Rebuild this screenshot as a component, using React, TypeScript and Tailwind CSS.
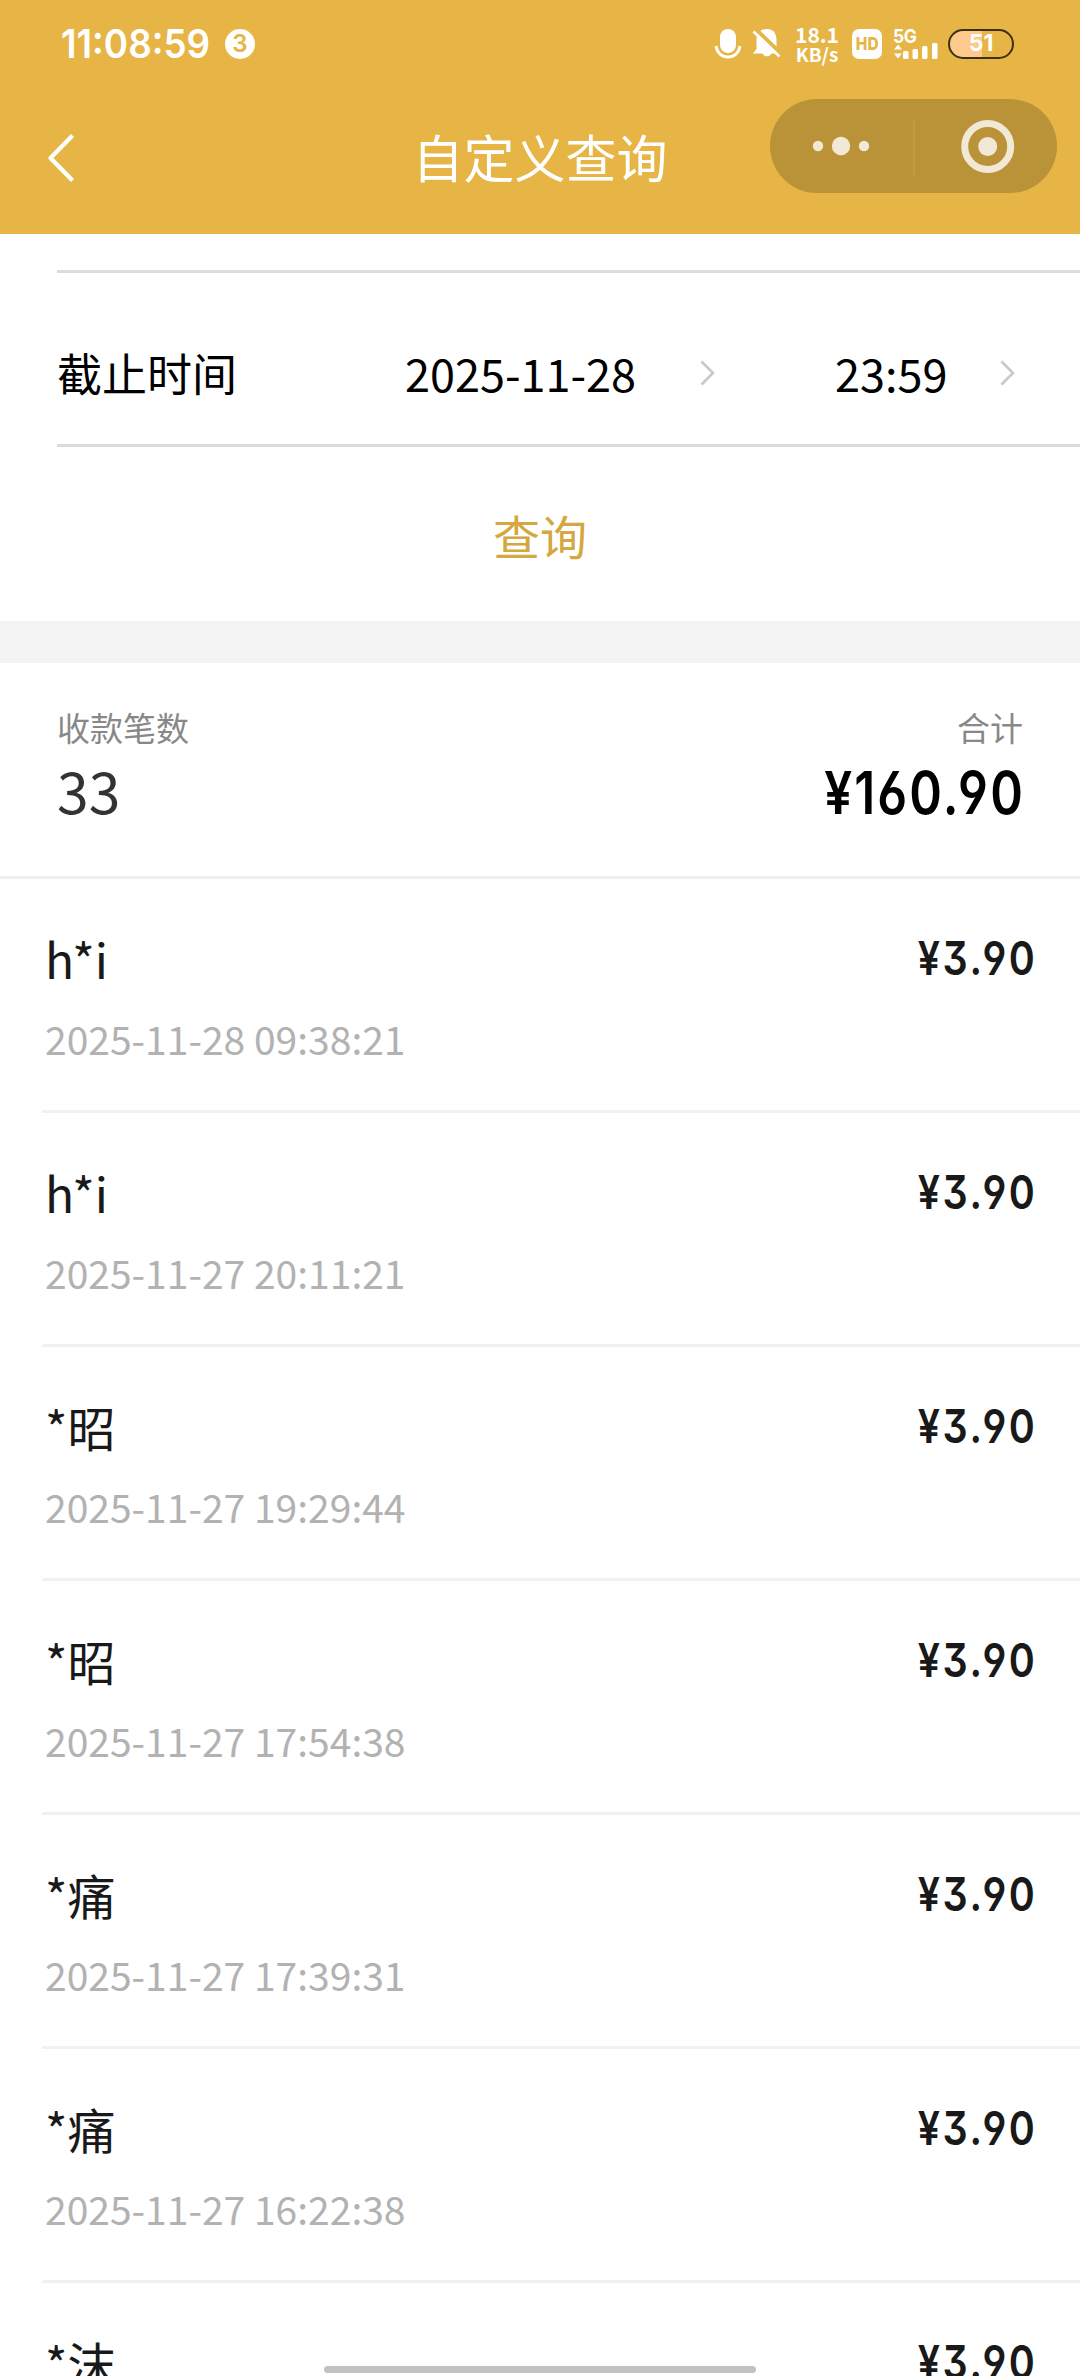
const records = [
  { name: 'h*i', time: '2025-11-28 09:38:21', amount: '¥3.90' },
  { name: 'h*i', time: '2025-11-27 20:11:21', amount: '¥3.90' },
  { name: '*昭', time: '2025-11-27 19:29:44', amount: '¥3.90' },
  { name: '*昭', time: '2025-11-27 17:54:38', amount: '¥3.90' },
  { name: '*痛', time: '2025-11-27 17:39:31', amount: '¥3.90' },
  { name: '*痛', time: '2025-11-27 16:22:38', amount: '¥3.90' },
  { name: '*沫', time: '', amount: '¥3.90' },
]

function StatusBar() {
  return (
    <div className="flex h-[87px] items-center pl-[61px] pr-[66px] font-['Inter',sans-serif] text-white">
      <span className="w-[164px] origin-left scale-x-[0.92] whitespace-nowrap text-[40px] leading-none font-semibold">11:08:59</span>
      <span className="mt-px flex h-[30px] w-[30px] items-center justify-center rounded-full bg-white text-[24px] leading-none font-semibold text-[#e6b546]">
        3
      </span>

      <div className="ml-auto flex items-center">
        {/* Microphone */}
        <svg className="h-[32px] w-[28px]" viewBox="0 0 28 32" fill="none">
          <rect x="6" y="1" width="16" height="24" rx="8" fill="white" />
          <path d="M2 18c1 7 6 11 12 11s11-4 12-11" stroke="white" strokeWidth="2.8" />
        </svg>

        {/* Muted bell */}
        <svg className="ml-[10px] h-[32px] w-[30px]" viewBox="0 0 30 32" fill="none">
          <path d="M15 1C8 1 4.500 6 4.500 12v9L1 25.500h9.500a5 5 0 0 0 9 0h6.500l-1.500-5V12C24.500 6 22 1 15 1Z" fill="white" />
          <path d="M3.500 1l26 25" stroke="#e6b546" strokeWidth="4" />
          <path d="M1.500 3.500l26 25" stroke="white" strokeWidth="2.600" />
        </svg>

        <div className="ml-[13px] flex w-[44px] flex-col items-center font-['Noto_Sans_CJK_SC',sans-serif] leading-[19px] font-bold">
          <span className="text-[21px]">18.1</span>
          <span className="text-[19px]">KB/s</span>
        </div>

        <span className="ml-[13px] flex h-[30px] w-[30px] items-center justify-center rounded-[7px] bg-white text-[18px] leading-none font-extrabold text-[#e6b546]">
          <span className="scale-x-[0.86]">HD</span>
        </span>

        {/* Signal */}
        <div className="relative ml-[11px] h-[30px] w-[46px]">
          <span className="absolute -top-[2px] left-0 origin-left scale-x-[0.92] text-[19px] leading-none font-bold tracking-[-0.5px]">5G</span>
          <svg className="h-[30px] w-[46px]" viewBox="0 0 46 30" fill="white">
            <path d="M1 20.500l4-5 4 5zM1 24.500l4 5 4-5z" />
            <rect x="10" y="22" width="5.500" height="8" rx="1.500" />
            <rect x="19.500" y="20" width="5.500" height="10" rx="1.500" />
            <rect x="29" y="17" width="5.500" height="13" rx="1.500" />
            <rect x="39" y="14" width="5.500" height="16" rx="1.500" />
          </svg>
        </div>

        <span className="ml-[9px] flex h-[30px] w-[66px] items-center justify-center rounded-full border-2 border-[#3d3013] bg-linear-to-r from-[#fdc98c] from-52% to-[#e6b546] to-52% text-[23px] leading-none font-bold">
          51
        </span>
      </div>
    </div>
  )
}

function Header() {
  return (
    <header className="h-[234px] shrink-0 bg-[#e6b546]">
      <StatusBar />
      <div className="grid h-[118px] grid-cols-3 items-center">
        <svg className="ml-[46px] mt-[24px] h-[52px] w-[30px]" viewBox="0 0 30 52" fill="none">
          <path d="M26.500 3.500L4.500 26l22 22.500" stroke="white" strokeWidth="4.300" strokeLinejoin="round" />
        </svg>
        <h1 className="mt-[21px] whitespace-nowrap text-center text-[51px] leading-none text-white">自定义查询</h1>
        <div className="mr-[23px] flex h-[94px] w-[287px] items-center justify-self-end rounded-full bg-[#ba9339]">
          <svg className="h-[94px] w-[287px]" viewBox="0 0 287 94" fill="none">
            <g fill="#f1e8d6">
              <circle cx="48" cy="47" r="5.200" />
              <circle cx="71" cy="47" r="9.200" />
              <circle cx="94" cy="47" r="5.200" />
              <circle cx="217.700" cy="47.500" r="9.500" />
            </g>
            <circle cx="217.700" cy="47.500" r="23" stroke="#f1e8d6" strokeWidth="7" />
            <path d="M144 20v57" stroke="#c39c41" strokeWidth="2" />
          </svg>
        </div>
      </div>
    </header>
  )
}

function Arrow() {
  return (
    <svg className="h-[26px] w-[16px]" viewBox="0 0 16 26" fill="none">
      <path d="M1.500 1.500L13 13 1.500 24.500" stroke="#c8c8c8" strokeWidth="2.600" />
    </svg>
  )
}

export default function App() {
  return (
    <div className="relative flex h-[2376px] w-[1080px] flex-col overflow-hidden bg-white font-['Noto_Sans_CJK_SC',sans-serif]">
      <Header />

      {/* End time filter */}
      <section className="h-[387px] shrink-0 pt-[36px]">
        <div className="ml-[57px] flex h-[177px] items-center border-y-[3px] border-[#dcdcdc] pt-[28px] text-[45px] leading-none text-black">
          <span className="w-[348px]">截止时间</span>
          <span className="w-[295px]">2025-11-28</span>
          <Arrow />
          <span className="ml-[119px] w-[165px]">23:59</span>
          <Arrow />
        </div>
        <button className="mt-[64px] block w-full text-center text-[47px] leading-none text-[#d4a740]">查询</button>
      </section>

      <div className="h-[42px] shrink-0 bg-[#f3f3f3]" />

      {/* Totals */}
      <section className="flex h-[216px] shrink-0 justify-between border-b-[3px] border-[#eeeeee] px-[57px] pt-[48px]">
        <div className="text-[#333333]">
          <div className="text-[33px] leading-none text-[#888888]">收款笔数</div>
          <div className="mt-[15px] text-[57px] leading-[60px]">33</div>
        </div>
        <div className="flex flex-col items-end">
          <div className="text-[33px] leading-none text-[#888888]">合计</div>
          <div className="mt-[19px] -mr-[2px] origin-right scale-x-[0.84] font-['Inter',sans-serif] text-[59px] leading-[60px] font-semibold tracking-[2.5px] text-black [font-feature-settings:'cv03','cv04','cv09']">
            ¥160.90
          </div>
        </div>
      </section>

      <ul className="shrink-0">
        {records.map((record, index) => (
          <li key={index} className="ml-[42px] flex h-[234px] justify-between border-b-[3px] border-[#f1f1f1] pl-[3px] pr-[43px]">
            <div>
              <div className="mt-[55px] text-[48px] leading-none text-[#191919]">{record.name}</div>
              <div className="mt-[37px] text-[39px] leading-none text-[#b2b2b2]">{record.time}</div>
            </div>
            <div className="mt-[49px] h-[60px] origin-right scale-x-[0.84] font-['Inter',sans-serif] text-[47px] leading-[60px] font-semibold tracking-[3px] text-[#191919] [font-feature-settings:'cv03','cv04','cv09']">
              {record.amount}
            </div>
          </li>
        ))}
      </ul>

      {/* Home indicator */}
      <div className="absolute bottom-[3px] left-[324px] h-[7px] w-[432px] rounded-full bg-[#c2c2c2]" />
    </div>
  )
}
